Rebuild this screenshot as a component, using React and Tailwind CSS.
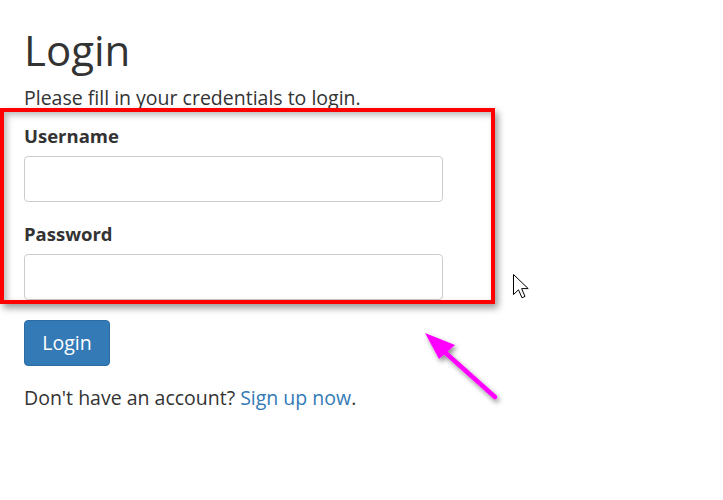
import React from "react";

const Cursor = () => (
  <svg width="20" height="28" viewBox="0 0 20 28" className="absolute left-[512px] top-[273px]">
    <path d="M1.5 1.5 L1.5 21.5 L6.5 16.8 L10 24.8 L13 23.4 L9.6 15.6 L16.2 15.6 Z" fill="#fff" stroke="#000" strokeWidth="1" strokeLinejoin="miter" />
  </svg>
);

const Arrow = () => (
  <svg width="110" height="100" viewBox="0 0 110 100" className="absolute left-[415px] top-[325px] overflow-visible">
    <defs>
      <filter id="sh" x="-30%" y="-30%" width="160%" height="160%">
        <feDropShadow dx="2" dy="3" stdDeviation="2.5" floodColor="#000" floodOpacity="0.45" />
      </filter>
    </defs>
    <g filter="url(#sh)">
      <line x1="80" y1="72" x2="24" y2="22" stroke="#ff00ff" strokeWidth="4.5" strokeLinecap="round" />
      <path d="M10 8 L40 20 L24 34 Z" fill="#ff00ff" />
    </g>
  </svg>
);

export default function App() {
  return (
    <div className="relative w-[723px] h-[500px] bg-white text-[#333] overflow-hidden" style={{ fontFamily: '"Open Sans", "Noto Sans", sans-serif' }}>
      <div className="px-6 pt-[22px]">
        <h1 className="text-[42px] leading-[56px] font-normal">Login</h1>
        <p className="text-[19.5px] leading-[24px] mt-[8px]">Please fill in your credentials to login.</p>

        <div className="mt-[14px] w-[419px]">
          <label className="block text-[18.5px] font-bold leading-[24px]">Username</label>
          <input className="mt-[8px] block w-full h-[46px] rounded-[4px] border border-[#ccc] px-3 outline-none" />
          <label className="block mt-[20px] text-[18.5px] font-bold leading-[24px]">Password</label>
          <input type="password" className="mt-[8px] block w-full h-[46px] rounded-[4px] border border-[#ccc] px-3 outline-none" />
        </div>

        <button className="mt-[20px] h-[46px] w-[86px] flex items-center justify-center rounded-[4px] bg-[#337ab7] border border-[#2e6da4] text-white text-[19.5px] leading-[24px]">Login</button>

        <p className="mt-[20px] text-[19.5px] leading-[24px]">
          Don't have an account? <a className="text-[#337ab7]">Sign up now</a>.
        </p>
      </div>

      {/* annotation box over the form */}
      <div className="absolute left-0 top-[108px] w-[495px] h-[196px] border-4 border-[#ff0000] shadow-[3px_4px_7px_rgba(0,0,0,0.4),inset_3px_3px_6px_rgba(0,0,0,0.28)]" />
      <Arrow />
      <Cursor />
    </div>
  );
}
